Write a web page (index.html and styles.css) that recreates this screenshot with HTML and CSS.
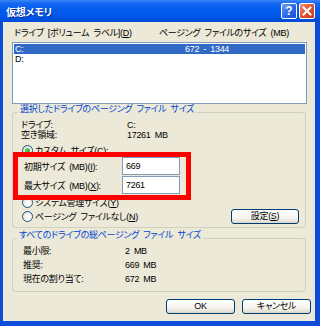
FILE: index.html
```html
<!DOCTYPE html>
<html lang="ja">
<head>
<meta charset="utf-8">
<title>仮想メモリ</title>
<link rel="stylesheet" href="styles.css">
</head>
<body>
<div class="window">
  <div class="titlebar">
    <span class="title">仮想メモリ</span>
    <span class="tb-btn help">?</span>
    <span class="tb-btn close">
      <svg width="10" height="10" viewBox="0 0 10 10"><path d="M1.5 1.5 L8.5 8.5 M8.5 1.5 L1.5 8.5" stroke="#fff" stroke-width="2" stroke-linecap="square"/></svg>
    </span>
  </div>
  <div class="body">
    <div class="list-header">
      <span>ドライブ [ボリューム ラベル](<u>D</u>)</span>
      <span>ページング ファイルのサイズ (MB)</span>
    </div>
    <div class="listbox">
      <div class="lrow sel"><span>C:</span><span>672 - 1344</span></div>
      <div class="lrow"><span>D:</span><span></span></div>
    </div>

    <div class="group g1">
      <span class="glabel">選択したドライブのページング ファイル サイズ</span>
      <div class="info">
        <span>ドライブ:</span><span>C:</span>
        <span>空き領域:</span><span>17261 MB</span>
      </div>
      <div class="radio-row custom"><span class="radio checked"></span><span>カスタム サイズ(<u>C</u>):</span></div>
      <div class="size-rows">
        <div class="srow"><span class="slabel">初期サイズ (MB)(<u>I</u>):</span><span class="input">669</span></div>
        <div class="srow"><span class="slabel">最大サイズ (MB)(<u>X</u>):</span><span class="input">7261</span></div>
      </div>
      <div class="radio-row sys"><span class="radio"></span><span>システム管理サイズ(<u>Y</u>)</span></div>
      <div class="none-row">
        <span class="radio"></span><span>ページング ファイルなし(<u>N</u>)</span>
        <span class="btn">設定(<u>S</u>)</span>
      </div>
    </div>

    <div class="group g2">
      <span class="glabel">すべてのドライブの総ページング ファイル サイズ</span>
      <div class="totals">
        <span>最小限:</span><span>2 MB</span>
        <span>推奨:</span><span>669 MB</span>
        <span>現在の割り当て:</span><span>672 MB</span>
      </div>
    </div>

    <div class="buttons">
      <span class="btn">OK</span>
      <span class="btn">キャンセル</span>
    </div>
  </div>
  <div class="highlight"></div>
</div>
</body>
</html>
```

FILE: styles.css
```css
html, body {
  margin: 0;
  padding: 0;
}
body {
  width: 320px;
  height: 326px;
  overflow: hidden;
  font-family: "Liberation Sans", "Noto Sans CJK JP", sans-serif;
  font-size: 9px;
  font-feature-settings: "palt";
  letter-spacing: -0.3px;
  word-spacing: 2px;
  color: #000;
}
u { text-decoration: underline; text-underline-offset: 1px; }

.window {
  position: relative;
  width: 320px;
  height: 326px;
  background: #0B4CD8;
  display: flex;
  flex-direction: column;
}
.titlebar {
  height: 22px;
  flex: none;
  display: flex;
  align-items: center;
  padding: 0 5px 0 6px;
  background: linear-gradient(#3A86F7 0%, #1468F2 15%, #035BEE 45%, #0056E8 75%, #004AD4 100%);
}
.title {
  flex: 1;
  color: #fff;
  font-weight: bold;
  font-size: 10px;
  letter-spacing: -0.2px;
  text-shadow: 1px 1px 0 #0A2C9C;
}
.tb-btn {
  width: 16px;
  height: 16px;
  box-sizing: border-box;
  border: 1px solid #fff;
  border-radius: 2px;
  display: flex;
  align-items: center;
  justify-content: center;
  color: #fff;
  font-family: "Liberation Sans", sans-serif;
  font-weight: bold;
  font-size: 12px;
  letter-spacing: 0;
}
.help {
  margin-right: 2px;
  background: linear-gradient(135deg, #6FA2F8 0%, #2D69EA 50%, #1A4FD6 100%);
}
.close {
  background: linear-gradient(135deg, #F0927A 0%, #E2512F 50%, #C9381C 100%);
}

.body {
  flex: 1;
  margin: 0 5px 5px 3px;
  background: #ECE9D8;
  padding: 6px 8px 0 9px;
  display: flex;
  flex-direction: column;
}
.list-header {
  display: grid;
  grid-template-columns: 145px auto;
  padding-left: 2px;
  height: 11px;
  line-height: 11px;
}
.listbox {
  margin-top: 3px;
  height: 62px;
  box-sizing: border-box;
  border: 1px solid #7F9DB9;
  background: #fff;
  padding: 1px;
}
.lrow {
  display: grid;
  grid-template-columns: 170px auto;
  height: 10px;
  line-height: 10px;
  padding-left: 1px;
}
.lrow.sel {
  background: #316AC5;
  color: #fff;
}

.group {
  border: 1px solid #D0D0BF;
  border-radius: 3px;
  margin-right: 1px;
  display: flex;
  flex-direction: column;
}
.glabel {
  align-self: flex-start;
  margin-top: -9px;
  padding: 0 2px;
  background: #ECE9D8;
  color: #0046D5;
  line-height: 11px;
}
.g1 { margin-top: 8px; padding-bottom: 3px; }
.g1 .glabel { margin-left: 5px; }
.info {
  margin-top: 5px;
  padding-left: 8px;
  display: grid;
  grid-template-columns: 106px auto;
  grid-auto-rows: 10px;
  line-height: 10px;
}
.radio-row {
  display: flex;
  align-items: center;
  padding-left: 9px;
  height: 12px;
}
.radio {
  width: 11px;
  height: 11px;
  box-sizing: border-box;
  border: 1px solid #1C5180;
  border-radius: 50%;
  background: radial-gradient(circle at 65% 65%, #FFFFFF 0%, #F3F2EC 50%, #D4D2C8 100%);
  margin-right: 2px;
  display: flex;
  align-items: center;
  justify-content: center;
}
.radio.checked::after {
  content: "";
  width: 5px;
  height: 5px;
  border-radius: 50%;
  background: radial-gradient(circle at 35% 35%, #5CD65C, #1E9A1E);
}
.custom { margin-top: 4px; }
.size-rows {
  margin-top: 1px;
  padding-left: 11px;
  display: flex;
  flex-direction: column;
  gap: 1px;
}
.srow {
  display: flex;
  align-items: center;
  height: 18px;
}
.slabel { width: 98px; }
.input {
  width: 58px;
  height: 18px;
  box-sizing: border-box;
  border: 1px solid #7F9DB9;
  background: #fff;
  padding-left: 3px;
  line-height: 16px;
}
.sys { margin-top: 2px; }
.none-row {
  margin-top: 1px;
  height: 15px;
  padding: 0 6px 0 9px;
  display: grid;
  grid-template-columns: 13px 1fr 68px;
  align-items: center;
}

.btn {
  box-sizing: border-box;
  border: 1px solid #003C74;
  border-radius: 3px;
  background: linear-gradient(#FFFFFF 0%, #F5F4EF 60%, #E3E0D5 90%, #D6D0C5 100%);
  display: flex;
  align-items: center;
  justify-content: center;
  height: 15px;
  line-height: 13px;
}

.g2 { margin-top: 10px; padding-bottom: 5px; }
.g2 .glabel { margin-left: 4px; }
.totals {
  margin-top: 3px;
  padding-left: 10px;
  display: grid;
  grid-template-columns: 102px auto;
  grid-auto-rows: 14px;
  line-height: 14px;
}

.buttons {
  margin-top: 7px;
  margin-right: -4px;
  display: grid;
  grid-template-columns: 69px 69px;
  justify-content: end;
  gap: 7px;
}

.highlight {
  position: absolute;
  left: 13px;
  top: 152px;
  width: 178px;
  height: 48px;
  box-sizing: border-box;
  border: 5px solid #FF0000;
}
```
